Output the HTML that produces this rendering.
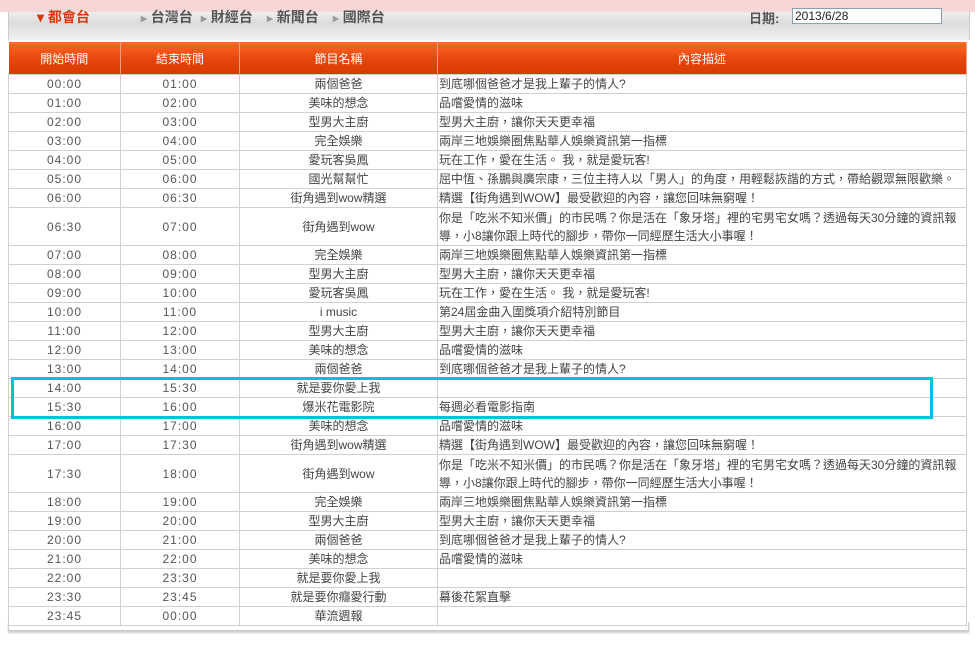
<!DOCTYPE html>
<html><head><meta charset="utf-8"><style>
body{margin:0;width:975px;height:660px;background:#fff;overflow:hidden;position:relative;font-family:"Liberation Sans","Noto Sans CJK TC",sans-serif;}
.pink{position:absolute;left:0;top:0;width:975px;height:12px;background:#f9d6d6;}
.nav{position:absolute;left:8px;top:12px;width:960px;height:28px;background:linear-gradient(#eeeeee,#dcdcdc 40%,#f0f0f0);border-left:1px solid #ccc;border-right:1px solid #ccc;}
.nav span{position:absolute;top:-5px;font-size:14px;font-weight:bold;color:#555;}
.nav .on{color:#d83a10;}
.date{position:absolute;left:749px;top:8px;font-size:13px;font-weight:bold;color:#555;}
.inp{position:absolute;left:792px;top:8px;width:150px;height:16px;border:1px solid #8aa0b8;background:#fff;font-size:12px;color:#222;line-height:14px;padding-left:2px;box-sizing:border-box;}
table{position:absolute;left:8px;top:42px;border-collapse:collapse;table-layout:fixed;width:959px;font-size:12px;color:#444;}
th{height:32px;background:linear-gradient(#ff6a26,#e84810 50%,#d83a00);color:#fff;font-weight:normal;border-right:1px solid #f3a080;padding:0;}
td{height:18px;border:1px solid #d0d0d0;padding:0;text-align:center;line-height:18px;white-space:nowrap;overflow:hidden;}
td:nth-child(1),td:nth-child(2){letter-spacing:1px;color:#555;}
td.d{text-align:left;white-space:normal;padding-left:1px;}
tr.t td{height:37px;}
.frame{position:absolute;left:8px;top:622px;width:959px;height:8px;border:1px solid #ccc;border-top:none;box-shadow:0 2px 2px #ccc;}
.box{position:absolute;left:11px;top:377px;width:916px;height:36px;border:3px solid #00c3db;}
</style></head><body>
<div class="pink"></div>
<div class="nav">
<span class="on" style="left:28px">▾ 都會台</span>
<span style="left:132px"><small style="color:#999">▸</small> 台灣台</span>
<span style="left:192px"><small style="color:#999">▸</small> 財經台</span>
<span style="left:258px"><small style="color:#999">▸</small> 新聞台</span>
<span style="left:324px"><small style="color:#999">▸</small> 國際台</span>
</div>
<div class="date">日期:</div>
<div class="inp">2013/6/28</div>
<table>
<colgroup><col style="width:112px"><col style="width:119px"><col style="width:198px"><col></colgroup>
<tr><th>開始時間</th><th>結束時間</th><th>節目名稱</th><th>內容描述</th></tr>
<tr><td>00:00</td><td>01:00</td><td>兩個爸爸</td><td class="d">到底哪個爸爸才是我上輩子的情人?</td></tr>
<tr><td>01:00</td><td>02:00</td><td>美味的想念</td><td class="d">品嚐愛情的滋味</td></tr>
<tr><td>02:00</td><td>03:00</td><td>型男大主廚</td><td class="d">型男大主廚，讓你天天更幸福</td></tr>
<tr><td>03:00</td><td>04:00</td><td>完全娛樂</td><td class="d">兩岸三地娛樂圈焦點華人娛樂資訊第一指標</td></tr>
<tr><td>04:00</td><td>05:00</td><td>愛玩客吳鳳</td><td class="d">玩在工作，愛在生活。 我，就是愛玩客!</td></tr>
<tr><td>05:00</td><td>06:00</td><td>國光幫幫忙</td><td class="d">屈中恆、孫鵬與廣宗康，三位主持人以「男人」的角度，用輕鬆詼諧的方式，帶給觀眾無限歡樂。</td></tr>
<tr><td>06:00</td><td>06:30</td><td>街角遇到wow精選</td><td class="d">精選【街角遇到WOW】最受歡迎的內容，讓您回味無窮喔！</td></tr>
<tr class="t"><td>06:30</td><td>07:00</td><td>街角遇到wow</td><td class="d">你是「吃米不知米價」的市民嗎？你是活在「象牙塔」裡的宅男宅女嗎？透過每天30分鐘的資訊報導，小8讓你跟上時代的腳步，帶你一同經歷生活大小事喔！</td></tr>
<tr><td>07:00</td><td>08:00</td><td>完全娛樂</td><td class="d">兩岸三地娛樂圈焦點華人娛樂資訊第一指標</td></tr>
<tr><td>08:00</td><td>09:00</td><td>型男大主廚</td><td class="d">型男大主廚，讓你天天更幸福</td></tr>
<tr><td>09:00</td><td>10:00</td><td>愛玩客吳鳳</td><td class="d">玩在工作，愛在生活。 我，就是愛玩客!</td></tr>
<tr><td>10:00</td><td>11:00</td><td>i music</td><td class="d">第24屆金曲入圍獎項介紹特別節目</td></tr>
<tr><td>11:00</td><td>12:00</td><td>型男大主廚</td><td class="d">型男大主廚，讓你天天更幸福</td></tr>
<tr><td>12:00</td><td>13:00</td><td>美味的想念</td><td class="d">品嚐愛情的滋味</td></tr>
<tr><td>13:00</td><td>14:00</td><td>兩個爸爸</td><td class="d">到底哪個爸爸才是我上輩子的情人?</td></tr>
<tr><td>14:00</td><td>15:30</td><td>就是要你愛上我</td><td class="d"></td></tr>
<tr><td>15:30</td><td>16:00</td><td>爆米花電影院</td><td class="d">每週必看電影指南</td></tr>
<tr><td>16:00</td><td>17:00</td><td>美味的想念</td><td class="d">品嚐愛情的滋味</td></tr>
<tr><td>17:00</td><td>17:30</td><td>街角遇到wow精選</td><td class="d">精選【街角遇到WOW】最受歡迎的內容，讓您回味無窮喔！</td></tr>
<tr class="t"><td>17:30</td><td>18:00</td><td>街角遇到wow</td><td class="d">你是「吃米不知米價」的市民嗎？你是活在「象牙塔」裡的宅男宅女嗎？透過每天30分鐘的資訊報導，小8讓你跟上時代的腳步，帶你一同經歷生活大小事喔！</td></tr>
<tr><td>18:00</td><td>19:00</td><td>完全娛樂</td><td class="d">兩岸三地娛樂圈焦點華人娛樂資訊第一指標</td></tr>
<tr><td>19:00</td><td>20:00</td><td>型男大主廚</td><td class="d">型男大主廚，讓你天天更幸福</td></tr>
<tr><td>20:00</td><td>21:00</td><td>兩個爸爸</td><td class="d">到底哪個爸爸才是我上輩子的情人?</td></tr>
<tr><td>21:00</td><td>22:00</td><td>美味的想念</td><td class="d">品嚐愛情的滋味</td></tr>
<tr><td>22:00</td><td>23:30</td><td>就是要你愛上我</td><td class="d"></td></tr>
<tr><td>23:30</td><td>23:45</td><td>就是要你癮愛行動</td><td class="d">幕後花絮直擊</td></tr>
<tr><td>23:45</td><td>00:00</td><td>華流週報</td><td class="d"></td></tr>
</table>
<div class="frame"></div>
<div class="box"></div>
</body></html>
